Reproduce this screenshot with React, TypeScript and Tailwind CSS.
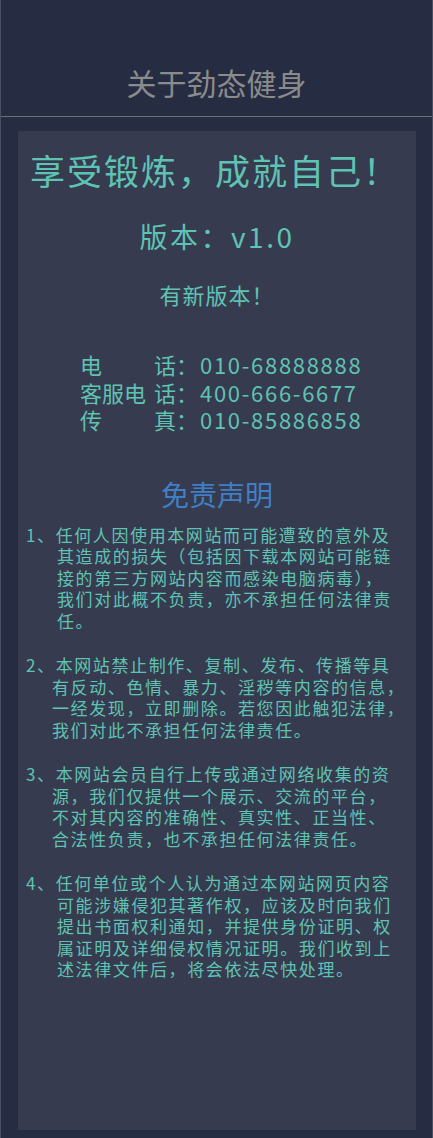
import React from "react";

const contacts = [
  { label: ["电", "话"], value: "010-68888888" },
  { label: ["客服电", "话"], value: "400-666-6677" },
  { label: ["传", "真"], value: "010-85886858" },
];

// each clause: first line carries the number, the rest are indented under the text
const clauses = [
  {
    indent: "pl-[39px]",
    lines: [
      "1、任何人因使用本网站而可能遭致的意外及",
      "其造成的损失（包括因下载本网站可能链",
      "接的第三方网站内容而感染电脑病毒），",
      "我们对此概不负责，亦不承担任何法律责",
      "任。",
    ],
  },
  {
    indent: "pl-[34px]",
    lines: [
      "2、本网站禁止制作、复制、发布、传播等具",
      "有反动、色情、暴力、淫秽等内容的信息，",
      "一经发现，立即删除。若您因此触犯法律，",
      "我们对此不承担任何法律责任。",
    ],
  },
  {
    indent: "pl-[34px]",
    lines: [
      "3、本网站会员自行上传或通过网络收集的资",
      "源，我们仅提供一个展示、交流的平台，",
      "不对其内容的准确性、真实性、正当性、",
      "合法性负责，也不承担任何法律责任。",
    ],
  },
  {
    indent: "pl-[39px]",
    lines: [
      "4、任何单位或个人认为通过本网站网页内容",
      "可能涉嫌侵犯其著作权，应该及时向我们",
      "提出书面权利通知，并提供身份证明、权",
      "属证明及详细侵权情况证明。我们收到上",
      "述法律文件后，将会依法尽快处理。",
    ],
  },
];

const App = () => {
  return (
    <div
      className="w-[433px] h-[1138px] bg-[#262d42] border-x border-[#4a5062] flex flex-col"
      style={{ fontFamily: '"Noto Sans CJK SC", "Noto Sans", sans-serif' }}
    >
      <header className="h-[117px] shrink-0 border-b border-[#6b6f78] flex items-end justify-center pb-[16px]">
        <h1 className="text-[30px] leading-[36px] text-[#8b8b8b] font-normal">关于劲态健身</h1>
      </header>

      <main className="mt-[14px] ml-[17px] mr-[16px] h-[999px] bg-[#373b4f] text-[#5ec3b3] flex flex-col">
        <div className="pt-[17px] pl-[12px] text-[35px] leading-[44px] tracking-[2px]">享受锻炼，成就自己！</div>
        <div className="mt-[26px] text-center text-[28px] leading-[36px] tracking-[2.5px]">版本：v1.0</div>
        <div className="mt-[25px] text-center text-[22px] leading-[30px] tracking-[1px]">有新版本！</div>

        <div className="mt-[42px] pl-[62px] flex flex-col text-[22px] leading-[27.5px]">
          {contacts.map((c) => (
            <div key={c.value} className="flex">
              <div className="w-[96px] flex justify-between">
                <span>{c.label[0]}</span>
                <span>{c.label[1]}</span>
              </div>
              <span className="w-[24px]">：</span>
              <span className="tracking-[1.7px]">{c.value}</span>
            </div>
          ))}
        </div>

        <div className="mt-[42px] text-center text-[28px] leading-[36px] text-[#3f7fc6]">免责声明</div>

        <div className="mt-[12px] flex flex-col gap-[23px] text-[17px] leading-[21.5px] tracking-[1.6px]">
          {clauses.map((p, i) => (
            <div key={i} className="flex flex-col">
              {p.lines.map((line, j) => (
                <div key={j} className={`whitespace-nowrap ${j === 0 ? "pl-[8px]" : p.indent}`}>
                  {line}
                </div>
              ))}
            </div>
          ))}
        </div>
      </main>
    </div>
  );
};

export default App;
